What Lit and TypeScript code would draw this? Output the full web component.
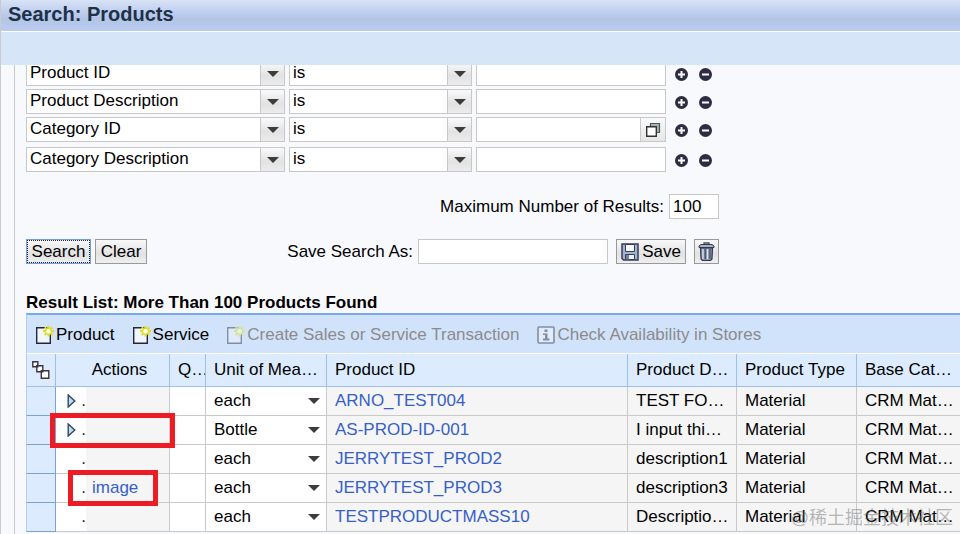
import { LitElement, html, css, svg, nothing } from "lit";
import { customElement, property } from "lit/decorators.js";

const newDocIcon = html`<svg class="icon" width="18" height="18" viewBox="0 0 18 18" aria-hidden="true">
  <path d="M.7 1.700h10L14.300 6v11.300H.7z" fill="#f1f6fc" stroke="#25263c" stroke-width="1.400" />
  <path d="M12.500 0v10.500M7 5.200h11M8.700 1.400l7.600 7.600M16.300 1.400l-7.600 7.600" stroke="#dede2a" stroke-width="2.200" />
  <circle cx="12.500" cy="5.200" r="2.200" fill="#fffff4" />
</svg>`;

const infoIcon = html`<svg class="icon" width="18" height="18" viewBox="0 0 18 18" aria-hidden="true">
  <rect x="1" y="1" width="16" height="16" rx="1" fill="#f4f8fc" stroke="#25263c" stroke-width="1.600" />
  <path d="M7.500 3.500h3v2.500h-3zM6 7.500h4.500V12.500h2V14.500h-6.500v-2h2V9H6z" fill="#25263c" />
</svg>`;

const saveIcon = html`<svg width="18" height="18" viewBox="0 0 18 18" aria-hidden="true">
  <path d="M1 1h16v16H2.500L1 15.500z" fill="#a3b5ce" stroke="#383c5c" stroke-width="1.500" />
  <path d="M4.500 1.500h9v7h-9z" fill="#f6f8fa" stroke="#383c5c" />
  <path d="M4.500 11.500h9v5h-9z" fill="#eef2f6" stroke="#383c5c" />
  <path d="M5 12h3v4.500H5z" fill="#7284a0" />
</svg>`;

const trashIcon = html`<svg width="17" height="19" viewBox="0 0 17 19" aria-hidden="true">
  <path d="M6 2.500V1h5v1.500" fill="none" stroke="#4a5068" stroke-width="1.300" />
  <path d="M1 5.500V4l2-1.500h11L16 4v1.500z" fill="#a5b3c4" stroke="#34384e" />
  <path d="M2.500 6h12l-.5 11-1.500 1.500h-8L3 17z" fill="#8696ad" stroke="#34384e" stroke-width="1.200" />
  <path d="M5 7v10M9.500 7v10" stroke="#dce5ee" stroke-width="1.300" />
  <path d="M7.200 7v10M12 7v10" stroke="#454c66" stroke-width="1.200" />
</svg>`;

const helpIcon = html`<svg width="16" height="16" viewBox="0 0 16 16" aria-hidden="true">
  <path d="M5.500 1.500h9v9h-9z" fill="#a4b4b4" stroke="#4c5858" stroke-width="1.200" />
  <path d="M1.700 4.700h9.600v9.600H1.700z" fill="#fff" stroke="#352f2f" stroke-width="1.400" />
</svg>`;

const treeIcon = html`<svg width="18" height="18" viewBox="0 0 18 18" aria-hidden="true">
  <g fill="#fff" stroke="#3a3340" stroke-width="1.400">
    <path d="M.8.8h5v5h-5zM4.800 4.800h6v6h-6zM9.300 9.800h7.500v7.400H9.300z" />
  </g>
</svg>`;

const expandIcon = html`<svg width="9" height="14" viewBox="0 0 9 14" aria-hidden="true">
  <path d="M1.200 1v12L7.800 7z" fill="#b9dcf0" stroke="#34455f" stroke-width="1.400" />
</svg>`;

const round = (minus: boolean) => html`<svg width="13" height="13" viewBox="0 0 13 13" aria-hidden="true">
  <circle cx="6.500" cy="6.500" r="6.500" fill="#2c2c42" />
  <path d="M3 6.500h7" stroke="#fff" stroke-width="2" />
  ${minus ? nothing : svg`<path d="M6.500 3v7" stroke="#fff" stroke-width="2" />`}
</svg>`;

const arrow = html`<svg class="arrow" width="12" height="6" viewBox="0 0 12 6" aria-hidden="true">
  <path d="M0 0h12L6 6z" fill="#3c3c3c" />
</svg>`;

@customElement("select-box")
class SelectBox extends LitElement {
  @property() value = "";
  @property() label = "";
  @property({ type: Boolean }) plain = false;

  static styles = css`
    :host { display: block; min-width: 0; }
    .box {
      display: grid;
      grid-template-columns: 1fr 24px;
      height: 25px;
      box-sizing: border-box;
      border: 1px solid #c8c8c8;
      background: #fff;
    }
    select {
      grid-area: 1 / 1 / 2 / 3;
      appearance: none;
      min-width: 0;
      border: 0;
      margin: 0;
      padding: 0 24px 2px 3px;
      background: none;
      color: #000;
      font: 17px/20px "Liberation Sans", Arial, sans-serif;
      outline: 0;
    }
    .button {
      grid-area: 1 / 2 / 2 / 3;
      display: flex;
      align-items: center;
      justify-content: center;
      border-left: 1px solid #c8c8c8;
      background: linear-gradient(#fafafa, #e2e2e2 60%, #ececec);
      pointer-events: none;
    }
    .plain { border: 0; background: none; }
    .plain select { padding-left: 8px; padding-bottom: 0; }
    .plain .button { border: 0; background: none; }
  `;

  render() {
    return html`<div class="box ${this.plain ? "plain" : ""}">
      <span class="button">${arrow}</span>
      <select aria-label=${this.label}><option>${this.value}</option></select>
    </div>`;
  }
}

@customElement("app-root")
class AppRoot extends LitElement {
  static styles = css`
    :host {
      display: flex;
      flex-direction: column;
      position: relative;
      height: 100vh;
      box-sizing: border-box;
      overflow: hidden;
      border-left: 1px solid #c9c9cf;
      background: #f8f9fd;
      color: #000;
      font: 17px/20px "Liberation Sans", Arial, sans-serif;
    }
    svg { display: block; flex: none; }
    h1 {
      margin: 0;
      padding: 2px 7px 5px;
      background: linear-gradient(#d9e2f5, #c4d3f1 30%, #b3c4e6 60%, #bacdf0);
      border-bottom: 1px solid #fff;
      color: #1c3248;
      font-size: 20px;
      line-height: 24px;
    }
    .band { flex: none; height: 33px; background: #d7e5f8; }
    main {
      flex: 1;
      min-height: 0;
      overflow: hidden;
      margin-left: 13px;
      border-left: 1px solid #c9c9c9;
      padding-left: 11px;
    }
    form { width: 693px; margin-top: -4px; }
    .criteria { display: flex; flex-direction: column; gap: 3px; }
    .row {
      display: grid;
      grid-template-columns: 259px 183px 190px auto;
      column-gap: 4px;
      align-items: center;
    }
    .tall { padding-bottom: 2px; }
    .field { display: flex; }
    input {
      flex: 1;
      min-width: 0;
      height: 25px;
      box-sizing: border-box;
      border: 1px solid #c8c8c8;
      border-radius: 0;
      padding: 0 3px;
      background: #fff;
      color: #000;
      font: inherit;
      outline: 0;
    }
    button {
      display: flex;
      align-items: center;
      justify-content: center;
      box-sizing: border-box;
      margin: 0;
      padding: 0;
      border: 0;
      background: none;
      color: #000;
      font: inherit;
    }
    .help {
      width: 25px;
      border: 1px solid #c8c8c8;
      border-left: 0;
      background: linear-gradient(#fafafa, #e6e6e6);
    }
    .round { display: flex; gap: 11px; padding: 2px 0 0 5px; }
    .max { display: flex; justify-content: flex-end; align-items: center; gap: 5px; margin-top: 22px; }
    .max input { flex: none; width: 50px; }
    .actions { display: flex; align-items: center; margin-top: 20px; }
    .push {
      height: 25px;
      border: 1px solid #999;
      background: linear-gradient(#f8f8f8, #e2e2e2 60%, #efefef);
    }
    .search { width: 65px; margin-right: 4px; border-color: #6f9fea; outline: 1px dotted #222; outline-offset: -2px; }
    .clear { width: 52px; }
    .save-as { display: flex; flex: 1; align-items: center; justify-content: flex-end; gap: 5px; }
    .save-as input { flex: none; width: 190px; }
    .save { width: 70px; gap: 3px; margin: 0 8px; }
    .trash { width: 25px; }
    h2 { margin: 29px 0 0; font-size: 17px; line-height: 20px; }
    .toolbar {
      display: flex;
      gap: 18px;
      box-sizing: border-box;
      height: 41px;
      padding-left: 9px;
      border-top: 2px solid #7aa8ec;
      border-left: 1px solid #b4cdf3;
      border-bottom: 1px solid #fff;
      background: #d1e3fa;
    }
    .toolbar button { gap: 2px; padding-top: 2px; white-space: nowrap; }
    .toolbar button:disabled { color: #8b8b8b; }
    button:disabled .icon { opacity: 0.45; }
    table { width: 100%; table-layout: fixed; border-collapse: separate; border-spacing: 0; }
    .c-sel { width: 30px; }
    .c-act { width: 114px; }
    .c-q { width: 36px; }
    .c-unit { width: 121px; }
    .c-id { width: 301px; }
    .c-desc { width: 109px; }
    .c-type { width: 120px; }
    th, td {
      box-sizing: border-box;
      padding: 0 0 0 8px;
      text-align: left;
      font-weight: 400;
      white-space: nowrap;
      border-right: 1px solid #c9c9c9;
    }
    th:last-child, td:last-child { border-right: 0; }
    th {
      height: 33px;
      overflow: hidden;
      border-color: #9dbef0;
      border-bottom: 1px solid #9dbef0;
      background: #dcecfe;
    }
    th:first-child { padding-left: 5px; border-left: 1px solid #b4cdf3; }
    th.center { text-align: center; padding-left: 14px; }
    td { height: 29px; border-bottom: 1px solid #c9c9c9; background: #f5f5f5; }
    td.sel { background: #dcecfe; border: 1px solid #77a3d6; border-width: 0 1px 1px; border-left-color: #b4cdf3; padding: 0; }
    td.white { background: #fff; padding: 0; }
    td.act { position: relative; }
    .act-line { display: flex; align-items: center; height: 28px; }
    .lead { display: flex; align-items: center; justify-content: flex-end; width: 30px; gap: 5px; }
    .rest { flex: 1; align-self: stretch; padding-left: 6px; background: #f5f5f5; line-height: 28px; }
    a { color: #3560c8; text-decoration: none; }
    .lead a { color: #222; }
    .mark { position: absolute; z-index: 1; box-sizing: border-box; border: 5px solid #ed1c24; pointer-events: none; }
    .wide { inset: -3px -6px -4px; }
    .narrow { inset: -4px 11px -4px 12px; }
    .watermark {
      position: absolute;
      right: 7px;
      bottom: 3px;
      color: rgba(100, 100, 100, 0.45);
      font: 18px/26px "Liberation Sans", "Noto Sans CJK SC", sans-serif;
    }
  `;

  private criteria = ["Product ID", "Product Description", "Category ID", "Category Description"];

  private products = [
    { unit: "each", id: "ARNO_TEST004", desc: "TEST FO…", expand: true },
    { unit: "Bottle", id: "AS-PROD-ID-001", desc: "I input thi…", expand: true, mark: "wide" },
    { unit: "each", id: "JERRYTEST_PROD2", desc: "description1" },
    { unit: "each", id: "JERRYTEST_PROD3", desc: "description3", action: "image", mark: "narrow" },
    { unit: "each", id: "TESTPRODUCTMASS10", desc: "Descriptio…" },
  ];

  render() {
    return html`
      <h1>Search: Products</h1>
      <div class="band"></div>
      <main>
        <form @submit=${(e: Event) => e.preventDefault()}>
          <div class="criteria">
            ${this.criteria.map((name) => {
              const help = name === "Category ID";
              return html`<div class="row ${help ? "tall" : ""}">
                <select-box .value=${name} label="Attribute"></select-box>
                <select-box .value=${"is"} label="Operator"></select-box>
                <div class="field">
                  <input type="text" aria-label=${name} />
                  ${help ? html`<button type="button" class="help" aria-label="Value help">${helpIcon}</button>` : nothing}
                </div>
                <div class="round">
                  <button type="button" aria-label="Add line">${round(false)}</button>
                  <button type="button" aria-label="Remove line">${round(true)}</button>
                </div>
              </div>`;
            })}
          </div>
          <div class="max">
            <label for="max">Maximum Number of Results:</label>
            <input id="max" type="text" value="100" />
          </div>
          <div class="actions">
            <button type="submit" class="push search">Search</button>
            <button type="button" class="push clear">Clear</button>
            <div class="save-as">
              <label for="save-as">Save Search As:</label>
              <input id="save-as" type="text" />
            </div>
            <button type="button" class="push save">${saveIcon}Save</button>
            <button type="button" class="push trash" aria-label="Delete">${trashIcon}</button>
          </div>
        </form>
        <h2>Result List: More Than 100 Products Found</h2>
        <div class="toolbar">
          <button type="button">${newDocIcon}Product</button>
          <button type="button">${newDocIcon}Service</button>
          <button type="button" disabled>${newDocIcon}Create Sales or Service Transaction</button>
          <button type="button" disabled>${infoIcon}Check Availability in Stores</button>
        </div>
        <table>
          <colgroup>
            <col class="c-sel" /><col class="c-act" /><col class="c-q" /><col class="c-unit" />
            <col class="c-id" /><col class="c-desc" /><col class="c-type" /><col />
          </colgroup>
          <thead>
            <tr>
              <th aria-label="Selection">${treeIcon}</th>
              <th class="center">Actions</th>
              <th>Q…</th>
              <th>Unit of Mea…</th>
              <th>Product ID</th>
              <th>Product D…</th>
              <th>Product Type</th>
              <th>Base Cat…</th>
            </tr>
          </thead>
          <tbody>
            ${this.products.map(
              (p) => html`<tr>
                <td class="sel"></td>
                <td class="white act">
                  <div class="act-line">
                    <span class="lead">
                      ${p.expand ? html`<button type="button" aria-label="Expand">${expandIcon}</button>` : nothing}
                      <a href="#">.</a>
                    </span>
                    <span class="rest">${p.action ? html`<a href="#">${p.action}</a>` : nothing}</span>
                  </div>
                  ${p.mark ? html`<div class="mark ${p.mark}"></div>` : nothing}
                </td>
                <td class="white"></td>
                <td class="white"><select-box plain .value=${p.unit} label="Unit of measure"></select-box></td>
                <td><a href="#">${p.id}</a></td>
                <td>${p.desc}</td>
                <td>Material</td>
                <td>CRM Mat…</td>
              </tr>`
            )}
          </tbody>
        </table>
      </main>
      <div class="watermark">@稀土掘金技术社区</div>
    `;
  }
}
